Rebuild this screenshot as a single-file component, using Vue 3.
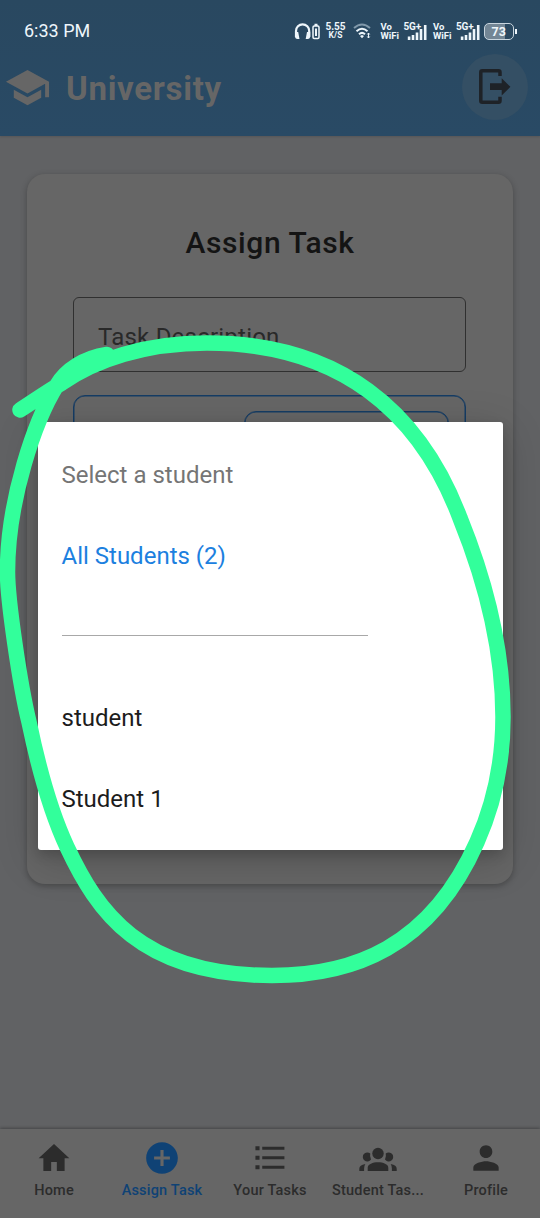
<script setup>
const loopPath = [
  'M107 354.500C84 358 66 370 57 385C35 420 7.500 500 7.500 572',
  'C7.500 600 20 685 29 722C40 775 53 817 67 847',
  'C97 911 140 975.500 272 975.500C352 975.500 430 948 477 842',
  'C494 804 503 764 503 717C503 660 490 592 460 518',
  'C420 412 340 343 207 343C145 343 95 360 62 383C48 391 34 401 20 410',
].join('')

const tabs = [
  { label: 'Home', icon: 'M10.200 20.200v-5.600h3.600v5.600h4.900v-8h3L12 3.200 2.300 12.200h3v8z' },
  { label: 'Assign Task', active: true, icon: 'M12 2C6.480 2 2 6.480 2 12s4.480 10 10 10 10-4.480 10-10S17.520 2 12 2zm5 11h-4v4h-2v-4H7v-2h4V7h2v4h4v2z' },
  { label: 'Your Tasks', icon: 'M2.800 4.600h2.600v2.500H2.800zM2.800 10.600h2.600v2.500H2.800zM2.800 16.600h2.600v2.500H2.800zM7.100 4.900h14v1.900h-14zM7.100 10.900h14v1.900h-14zM7.100 16.900h14v1.900h-14z' },
  { label: 'Student Tas...', icon: 'group' },
  { label: 'Profile', icon: 'M12 12c2.210 0 4-1.790 4-4s-1.790-4-4-4-4 1.790-4 4 1.790 4 4 4zm0 2c-2.670 0-8 1.340-8 4v2h16v-2c0-2.660-5.330-4-8-4z' },
]
</script>

<template>
  <div class="screen">
    <header class="header">
      <div class="status">
        <span class="time">6:33 PM</span>
        <div class="indicators">
          <svg class="head" width="26" height="18" viewBox="0 0 26 18">
            <path d="M2 15V9a6.600 6.600 0 0 1 13.200 0v6" fill="none" stroke="#eef6fb" stroke-width="2.200" />
            <path d="M1 10h3.200l1.300 7H3.500Q1 17 1 14zM16.200 10H13l-1.300 7h2Q16.200 17 16.200 14z" fill="#eef6fb" />
            <rect x="19" y="4" width="6" height="12.500" rx="1.200" fill="none" stroke="#eef6fb" stroke-width="1.500" />
            <path d="M20.500 1.800h3V4h-3zM21 6.500h2v7.500h-2z" fill="#eef6fb" />
          </svg>
          <span class="duo speed"><b>5.55</b><b>K/S</b></span>
          <svg class="wifi" width="18" height="16" viewBox="0 0 18 16" fill="none" stroke="#eef6fb" stroke-width="2">
            <path d="M1 5Q9-2 17 5" stroke="#8199aa" />
            <path d="M3.500 8.200q5.500-4.800 11 0M6 11.200q3-2.600 6 0" />
            <path d="M7 13l2 2.300 2-2.300-2-1z" fill="#eef6fb" stroke="none" />
            <path d="M15.500 10v5M14.300 11.500l1.200-1.500 1.200 1.500M14.300 13.500l1.200 1.500 1.200-1.500" stroke-width="1" />
          </svg>
          <template v-for="n in 2" :key="n">
            <span class="duo vo"><b>Vo</b><b>WiFi</b></span>
            <span class="cell">
              <b>5G+</b>
              <svg width="20" height="16" viewBox="0 0 20 16" fill="#eef6fb">
                <path d="M.8 12.500h2.600V16H.8zM4.700 11h2.600v5H4.700zM8.700 8.500h2.600V16H8.700zM12.700 5h2.600v11h-2.600zM16.900 1h2.600v15h-2.600z" />
              </svg>
            </span>
          </template>
          <span class="battery"><span>73</span></span>
        </div>
      </div>
      <div class="brandbar">
        <svg class="cap" width="47" height="47" viewBox="0 0 24 24" fill="#666">
          <path d="M5 13.180v4L12 21l7-3.820v-4L12 17l-7-3.820zM12 3 1 9l11 6 9-4.910V17h2V9L12 3z" />
        </svg>
        <span class="brand">University</span>
        <span class="logout">
          <svg width="36" height="40" viewBox="0 0 36 40">
            <path d="M23 8.900V5.300Q23 3.800 21.500 3.800H5.300Q3.800 3.800 3.800 5.300v28.400Q3.800 35.200 5.300 35.200h16.200Q23 35.200 23 33.700v-4" fill="none" stroke="#1e2227" stroke-width="3.500" />
            <path d="M13 16.300h11.700v-5l8.700 8.500-8.700 8.700v-5.500H13z" fill="#1e2227" />
          </svg>
        </span>
      </div>
    </header>

    <main class="page">
      <section class="card">
        <h1>Assign Task</h1>
        <div class="field">Task Description</div>
        <div class="selectbox"><div class="select"></div></div>
      </section>
    </main>

    <nav class="tabs">
      <div v-for="t in tabs" :key="t.label" class="tab" :class="{ active: t.active }">
        <svg v-if="t.icon === 'group'" width="38" height="38" viewBox="0 0 38 38" fill="currentColor">
          <circle cx="19" cy="14.500" r="5.700" />
          <path d="M8.700 32v-3.300c0-7.400 20.600-7.400 20.600 0V32z" />
          <path d="M11.300 14.600A4.500 4.500 0 1 0 12 20.500Q10.500 17.500 11.300 14.600zM26.700 14.600A4.500 4.500 0 1 1 26 20.500Q27.500 17.500 26.700 14.600zM.3 32v-2.200q0-3.500 6-4.700-1.200 2-1.200 4.700V32zM37.700 32v-2.200q0-3.500-6-4.700 1.200 2 1.200 4.700V32z" />
        </svg>
        <svg v-else width="38" height="38" viewBox="0 0 24 24" fill="currentColor"><path :d="t.icon" /></svg>
        <span>{{ t.label }}</span>
      </div>
    </nav>

    <div class="menu">
      <div class="option muted">Select a student</div>
      <div class="option accent">All Students (2)</div>
      <div class="option"><i class="rule"></i></div>
      <div class="option">student</div>
      <div class="option">Student 1</div>
    </div>

    <svg class="ink" width="540" height="1218" viewBox="0 0 540 1218">
      <path :d="loopPath" />
    </svg>
  </div>
</template>

<style>
body { margin: 0; }
</style>

<style scoped>
.screen {
  position: relative;
  width: 540px;
  height: 1218px;
  overflow: hidden;
  display: flex;
  flex-direction: column;
  background: #616264;
  font-family: Roboto, "Liberation Sans", sans-serif;
}
.header {
  height: 136px;
  flex: none;
  background: linear-gradient(#294860, #294a65);
  box-shadow: 0 1px 2px rgba(0, 0, 0, .12);
}
.status {
  height: 54px;
  box-sizing: border-box;
  padding: 8px 26.500px 0 24px;
  display: flex;
  align-items: center;
  justify-content: space-between;
  color: #eef6fb;
}
.time { font-size: 18px; line-height: 22px; }
.indicators { display: flex; align-items: center; height: 22px; }
.duo {
  display: flex;
  flex-direction: column;
  align-items: center;
  font-size: 10px;
  line-height: 9px;
}
.duo b, .cell b { font-weight: 700; }
.speed { margin-left: 6px; width: 20px; }
.speed b:last-child { font-size: 8.500px; }
.wifi { margin-left: 7px; }
.vo { margin-left: 10px; width: 18px; align-items: flex-start; font-size: 9.500px; }
.cell { margin-left: 5px; width: 23.500px; height: 18px; display: flex; flex-direction: column; align-items: flex-end; }
.cell b { font-size: 10px; line-height: 10px; align-self: flex-start; letter-spacing: -.2px; }
.cell svg { margin-top: -8.500px; }
.cell + .vo { margin-left: 6px; }
.battery {
  position: relative;
  margin-left: 4.500px;
  box-sizing: border-box;
  width: 29.500px;
  height: 17px;
  border: 1.500px solid #c8d5de;
  border-radius: 5px;
  background: linear-gradient(90deg, #738695 73%, #294860 73%);
  font-size: 12.500px;
  font-weight: 700;
  line-height: 15px;
  text-align: center;
}
.battery::after {
  content: "";
  position: absolute;
  right: -4px;
  top: 5px;
  width: 2px;
  height: 5px;
  background: #eef6fb;
}
.brandbar { height: 66px; display: flex; align-items: center; padding: 0 12px 0 3.500px; }
.brand { margin-left: 15.500px; margin-top: 3px; color: #666; font-size: 33px; font-weight: 700; letter-spacing: .7px; flex: 1; }
.logout {
  width: 66px;
  height: 66px;
  border-radius: 50%;
  background: #344f64;
  display: flex;
  align-items: center;
  justify-content: center;
}
.page { flex: 1; padding: 38px 27px 0; }
.card {
  box-sizing: border-box;
  height: 710px;
  padding: 48px 47px 0 46px;
  border-radius: 18px;
  background: #666;
  box-shadow: 0 2px 6px rgba(0, 0, 0, .28);
}
h1 {
  margin: 0;
  text-align: center;
  font-size: 30px;
  font-weight: 500;
  line-height: 42px;
  letter-spacing: .6px;
  padding-left: 1px;
  color: #141414;
}
.field {
  box-sizing: border-box;
  margin-top: 33px;
  height: 75px;
  padding: 23px 24px 0;
  border: 1px solid #303030;
  border-radius: 6px;
  color: #292929;
  font-size: 24px;
  line-height: 32px;
  letter-spacing: .22px;
}
.selectbox {
  box-sizing: border-box;
  margin-top: 23px;
  height: 110px;
  padding: 15px 16px;
  display: flex;
  justify-content: flex-end;
  border: 1px solid #153c64;
  border-radius: 12px;
  box-shadow: inset 0 0 0 .5px #153c64;
}
.select {
  box-sizing: border-box;
  width: 205px;
  height: 76px;
  border: 1px solid #153c64;
  border-radius: 12px;
  box-shadow: inset 0 0 0 .5px #153c64;
}
.tabs {
  height: 89px;
  flex: none;
  display: grid;
  grid-template-columns: repeat(5, 108px);
  background: #666;
  box-shadow: 0 -1px 3px rgba(0, 0, 0, .3);
}
.tab { display: flex; flex-direction: column; align-items: center; padding-top: 10px; color: #2c2c2c; }
.tab span { margin-top: 4px; font-size: 14.500px; font-weight: 500; line-height: 20px; letter-spacing: .2px; white-space: nowrap; }
.tab.active { color: #0f4275; }
.menu {
  position: absolute;
  left: 37.500px;
  top: 422px;
  width: 465px;
  height: 427.500px;
  box-sizing: border-box;
  padding-top: 13px;
  border-radius: 3px;
  background: #fff;
  box-shadow: 0 10px 44px rgba(0, 0, 0, .2), 0 5px 12px rgba(0, 0, 0, .16);
}
.option {
  height: 81px;
  padding-left: 24px;
  font-size: 24px;
  line-height: 81.500px;
  color: #1c1c1c;
}
.muted { color: #757575; }
.accent { color: #1c80df; }
.rule { display: block; width: 306px; height: 1px; background: #a8a8a8; position: relative; top: 38px; }
.ink { position: absolute; left: 0; top: 0; pointer-events: none; }
.ink path { fill: none; stroke: #32ff9b; stroke-width: 15.500; stroke-linecap: round; stroke-linejoin: round; }
</style>
